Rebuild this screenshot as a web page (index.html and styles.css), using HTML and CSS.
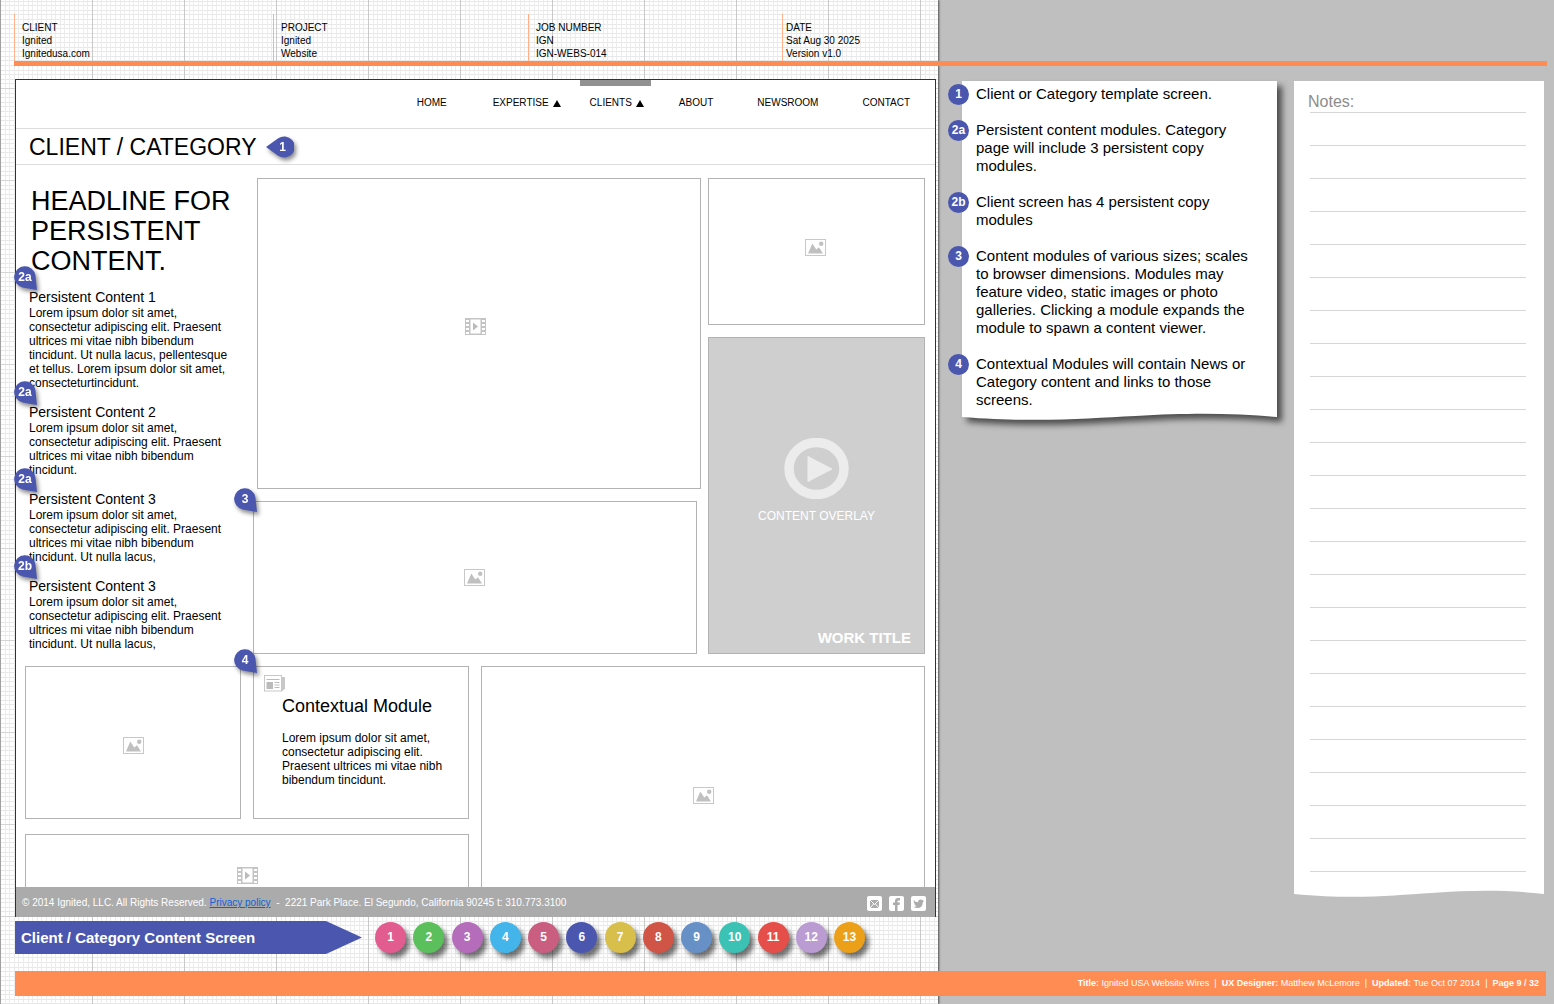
FILE: index.html
```
<!DOCTYPE html>
<html lang="en">
<head>
  <meta charset="UTF-8" />
  <meta name="viewport" content="width=device-width, initial-scale=1.0"/>
  <title>Ignited USA Website Wires</title>
  <link rel="stylesheet" href="styles.css">
</head>
<body>

<!-- shared icons -->
<svg class="sprite" aria-hidden="true">
  <symbol id="icon-image" viewBox="0 0 21 17">
    <rect x="0.5" y="0.5" width="20" height="16" fill="#fff" stroke="#c8c8c8"/>
    <path d="M3 14.5 7.3 4.5l4 6 2.700-2.300 4 6.300z" fill="#c0c0c0"/>
    <circle cx="16.200" cy="4.800" r="2.200" fill="#c0c0c0"/>
  </symbol>
  <symbol id="icon-video" viewBox="0 0 21 17">
    <path d="M0 0h21v17H0z" fill="#c4c4c4"/>
    <path d="M5.500 1.500h10v14h-10zM1 2h3v2H1zM1 6h3v2H1zM1 10h3v2H1zM1 14h3v2H1zM17 2h3v2h-3zM17 6h3v2h-3zM17 10h3v2h-3zM17 14h3v2h-3z" fill="#fff"/>
    <path d="M8 4.500v8l5-4z" fill="#bbb"/>
  </symbol>
  <symbol id="icon-news" viewBox="0 0 21 17">
    <path d="M18 2h3v11.500l-3 3z" fill="#c8c8c8"/>
    <rect x="0.500" y="0.500" width="17" height="15.500" fill="#fff" stroke="#c8c8c8"/>
    <path d="M2.500 4h13v1h-13zM2.500 7h6.500v7H2.500zM10.500 7h5v1h-5zM10.500 9.500h5v1h-5zM10.500 12h5v1h-5z" fill="#bbb"/>
  </symbol>
  <symbol id="pin" viewBox="0 0 23 24">
    <path d="M21.400 9.200A10.700 10.700 0 1 0 8.600 21.400L23 24z" fill="#4b57ae"/>
  </symbol>
  <symbol id="pin-left" viewBox="0 0 28 22">
    <path d="M0 11 12.200 2.200A10.600 10.600 0 1 1 12.200 19.800z" fill="#4b57ae"/>
  </symbol>
  <symbol id="triangle" viewBox="0 0 8 7">
    <path d="M4 0l4 7H0z"/>
  </symbol>
  <symbol id="wave" viewBox="0 0 100 8" preserveAspectRatio="none">
    <path d="M0 0H100V4C85 0 72 0 55 3 40 5 25 10 0 4z" fill="#fff"/>
  </symbol>
</svg>

<div class="page">
  <div class="graph-paper"></div>

  <header class="job-header">
    <div class="job-cell">
      <h2>CLIENT</h2>
      <p>Ignited</p>
      <p>Ignitedusa.com</p>
    </div>
    <div class="job-cell">
      <h2>PROJECT</h2>
      <p>Ignited</p>
      <p>Website</p>
    </div>
    <div class="job-cell">
      <h2>JOB NUMBER</h2>
      <p>IGN</p>
      <p>IGN-WEBS-014</p>
    </div>
    <div class="job-cell">
      <h2>DATE</h2>
      <p>Sat Aug 30 2025</p>
      <p>Version v1.0</p>
    </div>
  </header>

  <main class="wireframe">
    <nav class="site-nav">
      <a href="#">HOME</a>
      <a href="#" class="has-menu">EXPERTISE <svg><use href="#triangle"/></svg></a>
      <a href="#" class="has-menu active">CLIENTS <svg><use href="#triangle"/></svg></a>
      <a href="#">ABOUT</a>
      <a href="#">NEWSROOM</a>
      <a href="#">CONTACT</a>
    </nav>

    <div class="title-row">
      <h1>CLIENT / CATEGORY</h1>
      <span class="pin pin-left"><svg><use href="#pin-left"/></svg><b>1</b></span>
    </div>

    <div class="content">
      <div class="side">
        <h2>HEADLINE FOR PERSISTENT CONTENT.</h2>
        <section>
          <span class="pin"><svg><use href="#pin"/></svg><b>2a</b></span>
          <h3>Persistent Content 1</h3>
          <p>Lorem ipsum dolor sit amet, consectetur adipiscing elit. Praesent ultrices mi vitae nibh bibendum tincidunt. Ut nulla lacus, pellentesque et tellus. Lorem ipsum dolor sit amet, consecteturtincidunt.</p>
        </section>
        <section>
          <span class="pin"><svg><use href="#pin"/></svg><b>2a</b></span>
          <h3>Persistent Content 2</h3>
          <p>Lorem ipsum dolor sit amet, consectetur adipiscing elit. Praesent ultrices mi vitae nibh bibendum tincidunt.</p>
        </section>
        <section>
          <span class="pin"><svg><use href="#pin"/></svg><b>2a</b></span>
          <h3>Persistent Content 3</h3>
          <p>Lorem ipsum dolor sit amet, consectetur adipiscing elit. Praesent ultrices mi vitae nibh bibendum tincidunt. Ut nulla lacus,</p>
        </section>
        <section>
          <span class="pin"><svg><use href="#pin"/></svg><b>2b</b></span>
          <h3>Persistent Content 3</h3>
          <p>Lorem ipsum dolor sit amet, consectetur adipiscing elit. Praesent ultrices mi vitae nibh bibendum tincidunt. Ut nulla lacus,</p>
        </section>
      </div>

      <div class="column">
        <div class="module hero"><svg class="icon"><use href="#icon-video"/></svg></div>
        <div class="module wide">
          <span class="pin"><svg><use href="#pin"/></svg><b>3</b></span>
          <svg class="icon"><use href="#icon-image"/></svg>
        </div>
      </div>

      <div class="column">
        <div class="module thumb"><svg class="icon"><use href="#icon-image"/></svg></div>
        <div class="module overlay">
          <svg class="play" viewBox="0 0 65 61">
            <ellipse cx="32.500" cy="30.500" rx="27.500" ry="26" fill="none" stroke="#ececec" stroke-width="9.500"/>
            <path d="M24 18.500v25l24-12.500z" fill="#ececec" stroke="#ececec" stroke-linejoin="round"/>
          </svg>
          <p>CONTENT OVERLAY</p>
          <h3>WORK TITLE</h3>
        </div>
      </div>
    </div>

    <div class="more">
      <div class="module"><svg class="icon"><use href="#icon-image"/></svg></div>
      <div class="module contextual">
        <span class="pin"><svg><use href="#pin"/></svg><b>4</b></span>
        <svg class="icon"><use href="#icon-news"/></svg>
        <h3>Contextual Module</h3>
        <p>Lorem ipsum dolor sit amet, consectetur adipiscing elit. Praesent ultrices mi vitae nibh bibendum tincidunt.</p>
      </div>
      <div class="module tall"><svg class="icon"><use href="#icon-image"/></svg></div>
      <div class="module double"><svg class="icon"><use href="#icon-video"/></svg></div>
    </div>

    <footer class="site-footer">
      <p>© 2014 Ignited, LLC. All Rights Reserved. <a href="#">Privacy policy</a> &nbsp;-&nbsp; 2221 Park Place. El Segundo, California 90245 t: 310.773.3100</p>
      <div class="social">
        <a href="#" aria-label="Email"><svg viewBox="0 0 15 15"><rect width="15" height="15" rx="2" fill="#fff"/><path d="M3 4h9v8H3z" fill="#ababab"/><path d="M3 4l4.500 4.500L12 4M3 12l3.500-4M12 12L8.500 8" fill="none" stroke="#fff"/></svg></a>
        <a href="#" aria-label="Facebook"><svg viewBox="0 0 15 15"><rect width="15" height="15" rx="2" fill="#fff"/><path d="M6 15V9H4V6.500h2V5q0-3 3-3h2v2.500H9.500q-1 0-1 1v1H11L10.500 9h-2v6z" fill="#ababab"/></svg></a>
        <a href="#" aria-label="Twitter"><svg viewBox="0 0 15 15"><rect width="15" height="15" rx="2" fill="#fff"/><path d="M2.500 4q2 2.300 4.700 2.300Q7 3.500 9.500 3.500q1 0 1.600.6l1.400-.4-.8 1.400 1.300-.2-1.200 1.300Q11.600 12 6.500 12 4 12 2.500 10.800q2 0 3-.9-1.800-.3-2.200-1.700h1Q2.700 7.500 2.700 6l1 .2Q2 5.300 2.500 4z" fill="#ababab"/></svg></a>
      </div>
    </footer>
  </main>

  <aside class="sheet callouts">
    <div class="sheet-paper"><div></div><svg><use href="#wave"/></svg></div>
    <ol>
      <li><span class="marker">1</span>Client or Category template screen.</li>
      <li><span class="marker">2a</span>Persistent content modules. Category page will include 3 persistent copy modules.</li>
      <li><span class="marker">2b</span>Client screen has 4 persistent copy modules</li>
      <li><span class="marker">3</span>Content modules of various sizes; scales to browser dimensions. Modules may feature video, static images or photo galleries. Clicking a module expands the module to spawn a content viewer.</li>
      <li><span class="marker">4</span>Contextual Modules will contain News or Category content and links to those screens.</li>
    </ol>
  </aside>

  <aside class="sheet notes">
    <div class="sheet-paper"><div></div><svg><use href="#wave"/></svg></div>
    <div class="notes-body">
      <label for="notes">Notes:</label>
      <textarea id="notes" rows="23"></textarea>
    </div>
  </aside>

  <div class="screen-row">
    <h2 class="screen-tag">Client / Category Content Screen</h2>
    <nav class="screens">
      <a href="#" class="pink">1</a>
      <a href="#" class="green">2</a>
      <a href="#" class="orchid">3</a>
      <a href="#" class="sky">4</a>
      <a href="#" class="rose">5</a>
      <a href="#" class="indigo">6</a>
      <a href="#" class="gold">7</a>
      <a href="#" class="brick">8</a>
      <a href="#" class="steel">9</a>
      <a href="#" class="teal">10</a>
      <a href="#" class="red">11</a>
      <a href="#" class="lilac">12</a>
      <a href="#" class="amber">13</a>
    </nav>
  </div>

  <footer class="doc-footer">
    <b>Title:</b> Ignited USA Website Wires &nbsp;|&nbsp; <b>UX Designer:</b> Matthew McLemore &nbsp;|&nbsp; <b>Updated:</b> Tue Oct 07 2014 &nbsp;|&nbsp; <b>Page 9 / 32</b>
  </footer>
</div>

</body>
</html>
```
FILE: styles.css
```
* {
  margin: 0;
  padding: 0;
  box-sizing: border-box;
}

body {
  font-family: "Liberation Sans", Arial, sans-serif;
  font-size: 12px;
  line-height: 14px;
  color: #000;
  background: #bfbfbf;
}

h1, h2, h3 {
  font-weight: 400;
}

a {
  color: inherit;
  text-decoration: none;
}

svg {
  display: block;
}

.sprite {
  position: absolute;
  width: 0;
  height: 0;
}

/* page frame */
.page {
  display: grid;
  grid-template-columns: 938fr 356fr 260fr;
  grid-template-rows: auto 1fr auto auto;
  min-height: 100vh;
}

.graph-paper {
  grid-column: 1;
  grid-row: 1 / -1;
  border-left: 1px solid #a0a0a0;
  background-color: #fff;
  background-image:
    linear-gradient(90deg, #c9c9c9 1px, transparent 1px),
    linear-gradient(#d4d4d4 1px, transparent 1px),
    repeating-linear-gradient(90deg, #ececec 0 1px, transparent 1px 5%),
    repeating-linear-gradient(#e8e8e8 0 1px, transparent 1px 5%);
  background-size: 92px 92px;
  background-position: -1px -4px;
  box-shadow: 1px 0 2px rgba(0, 0, 0, 0.6);
}

.job-header {
  grid-column: 1 / -1;
  grid-row: 1;
  display: grid;
  grid-template-columns: 259fr 255fr 254fr 765fr;
  margin: 14px 7px 0 14px;
  border-bottom: 5px solid #ff8c52;
  font-size: 10px;
  line-height: 13px;
}

.job-cell {
  padding: 7px 7px 1px;
  border-left: 1px solid #ffb18c;
}

.job-cell:last-child {
  padding-left: 3px;
}

.job-cell h2 {
  font-size: 10px;
}

/* wireframe */
.wireframe {
  grid-column: 1;
  grid-row: 2;
  display: flex;
  flex-direction: column;
  align-self: start;
  margin: 13px 2px 0 15px;
  border: 1px solid #333;
  border-bottom: 0;
  background: #fff;
}

.site-nav {
  display: flex;
  justify-content: flex-end;
  gap: 12px;
  height: 49px;
  padding-right: 9px;
  border-bottom: 1px solid #ddd;
  font-size: 10px;
}

.site-nav a {
  display: flex;
  align-items: center;
  gap: 4px;
  padding: 0 16px 8px;
  border-top: 6px solid transparent;
}

.site-nav a:first-child {
  margin-right: 8px;
}

.site-nav .has-menu {
  padding: 0 7px 8px 10px;
}

.site-nav .active {
  border-top-color: #919191;
}

.site-nav svg {
  width: 8px;
  height: 7px;
}

.title-row {
  display: flex;
  align-items: center;
  gap: 9px;
  height: 36px;
  padding-left: 13px;
  border-bottom: 1px solid #ddd;
}

.title-row h1 {
  font-size: 23px;
  line-height: 28px;
}

.content {
  display: grid;
  grid-template-columns: 221fr 448fr 217fr;
  gap: 7px;
  padding: 13px 10px 0 9px;
}

.side {
  padding: 8px 12px 0 4px;
}

.side h2 {
  margin: 0 0 13px 2px;
  font-size: 27px;
  line-height: 30px;
}

.side section {
  position: relative;
  margin-bottom: 14px;
}

.side section:last-child {
  margin-bottom: 0;
}

.side h3 {
  font-size: 14px;
  line-height: 17px;
}

.column {
  display: flex;
  flex-direction: column;
  gap: 12px;
}

.module {
  position: relative;
  display: flex;
  align-items: center;
  justify-content: center;
  border: 1px solid #b3b3b3;
}

.icon {
  width: 21px;
  height: 17px;
}

.hero {
  align-self: flex-end;
  width: 99%;
  height: 311px;
  padding: 0 8px 14px 0;
}

.wide {
  width: 99%;
  height: 153px;
}

.thumb {
  height: 147px;
  padding: 0 2px 8px 0;
}

.overlay {
  flex-direction: column;
  height: 317px;
  padding: 100px 13px 6px;
  background: #cfcfcf;
  color: #fff;
}

.play {
  width: 65px;
  height: 61px;
}

.overlay p {
  margin-top: 10px;
}

.overlay h3 {
  align-self: flex-end;
  margin-top: auto;
  font-size: 15px;
  font-weight: 700;
  line-height: 18px;
}

/* last rows run on under the site footer */
.more {
  display: grid;
  grid-template-columns: 216fr 216fr 444fr;
  grid-template-rows: 153px 83px;
  gap: 15px 12px;
  margin: 12px 10px -30px 9px;
}

.more .module {
  padding-top: 6px;
}

.more .tall {
  grid-column: 3;
  grid-row: 1 / 3;
  padding-top: 8px;
}

.more .double {
  grid-column: 1 / 3;
  grid-row: 2;
  padding-top: 0;
}

.more .contextual {
  flex-direction: column;
  align-items: stretch;
  justify-content: flex-start;
  padding: 8px 24px 0 28px;
}

.contextual .icon {
  margin-left: -18px;
}

.contextual h3 {
  margin: 3px 0 14px;
  font-size: 18px;
  line-height: 22px;
  white-space: nowrap;
}

.site-footer {
  position: relative;
  display: flex;
  align-items: center;
  justify-content: space-between;
  height: 30px;
  padding: 2px 9px 0 6px;
  background: #ababab;
  color: #fff;
  font-size: 10px;
}

.site-footer p a {
  color: #0f62d6;
  text-decoration: underline;
}

.social {
  display: flex;
  gap: 7px;
}

.social svg {
  width: 15px;
  height: 15px;
}

/* annotation pins */
.pin {
  position: absolute;
  top: -14px;
  left: -20px;
  width: 23px;
  height: 24px;
  color: #fff;
  font-size: 12px;
  line-height: 22px;
  filter: drop-shadow(2px 3px 2px rgba(0, 0, 0, 0.45));
}

.pin svg {
  width: 100%;
  height: 100%;
}

.pin b {
  position: absolute;
  top: 0;
  left: 0;
  width: 22px;
  text-align: center;
}

.more .pin {
  top: -18px;
}

.side .pin {
  top: -23px;
  left: -15px;
}

.pin-left {
  position: relative;
  top: 0;
  left: 0;
  width: 28px;
  height: 22px;
}

.pin-left b {
  left: 6px;
}

/* paper sheets on the right */
.sheet {
  grid-row: 2;
  display: grid;
  align-self: start;
  margin-top: 15px;
}

.sheet > * {
  grid-area: 1 / 1;
}

.sheet-paper {
  display: flex;
  flex-direction: column;
}

.sheet-paper div {
  flex: 1;
  background: #fff;
}

.sheet-paper svg {
  width: 100%;
  height: 8px;
}

.callouts {
  grid-column: 2;
  margin-left: 24px;
  margin-right: 17px;
}

.callouts .sheet-paper {
  filter: drop-shadow(5px 5px 3px rgba(0, 0, 0, 0.6));
}

.callouts ol {
  display: flex;
  flex-direction: column;
  gap: 18px;
  padding: 4px 20px 12px 14px;
  list-style: none;
  font-size: 15px;
  line-height: 18px;
}

.callouts li {
  position: relative;
}

.marker {
  position: absolute;
  top: -1px;
  left: -28px;
  width: 21px;
  height: 21px;
  border-radius: 50%;
  background: #4b57ae;
  color: #fff;
  font-size: 12px;
  font-weight: 700;
  line-height: 21px;
  text-align: center;
}

.notes {
  grid-column: 3;
  margin-right: 10px;
}

.notes-body {
  padding: 0 18px 26px 16px;
}

.notes label {
  display: block;
  margin-left: -2px;
  padding-top: 11px;
  font-size: 16px;
  line-height: 20px;
  color: #8c8c8c;
}

.notes textarea {
  display: block;
  width: 100%;
  border: 0;
  border-top: 1px solid #d6d6d6;
  outline: none;
  resize: none;
  background: repeating-linear-gradient(transparent 0 32px, #d6d6d6 32px 33px);
  font: 15px/33px "Liberation Sans", Arial, sans-serif;
  overflow: hidden;
}

/* screen index */
.screen-row {
  grid-column: 1;
  grid-row: 3;
  display: grid;
  grid-template-columns: 347fr 490fr 60fr;
  gap: 13px;
  align-items: center;
  margin: 4px 0 17px 15px;
}

.screen-tag {
  padding-left: 6px;
  background: #4b57ae;
  clip-path: polygon(0 0, calc(100% - 36px) 0, 100% 50%, calc(100% - 36px) 100%, 0 100%);
  color: #fff;
  font-size: 15px;
  font-weight: 700;
  line-height: 33px;
}

.screens {
  display: flex;
  justify-content: space-between;
}

.screens a {
  width: 31px;
  height: 31px;
  border-radius: 50%;
  box-shadow: 4px 5px 5px rgba(0, 0, 0, 0.55);
  color: #fff;
  font-size: 12px;
  font-weight: 700;
  line-height: 31px;
  text-align: center;
}

.pink { background: #e25c90; }
.green { background: #5bbf5c; }
.orchid { background: #b56cba; }
.sky { background: #44b5ea; }
.rose { background: #c95e80; }
.indigo { background: #4b57ae; }
.gold { background: #d8be4b; }
.brick { background: #d05546; }
.steel { background: #6690c6; }
.teal { background: #3cc2b4; }
.red { background: #e64e4a; }
.lilac { background: #ba9bd2; }
.amber { background: #eca01a; }

.doc-footer {
  grid-column: 1 / -1;
  grid-row: 4;
  margin: 0 8px 8px 15px;
  padding-right: 7px;
  background: #ff8c52;
  color: #fff;
  font-size: 9px;
  line-height: 25px;
  text-align: right;
}
```
